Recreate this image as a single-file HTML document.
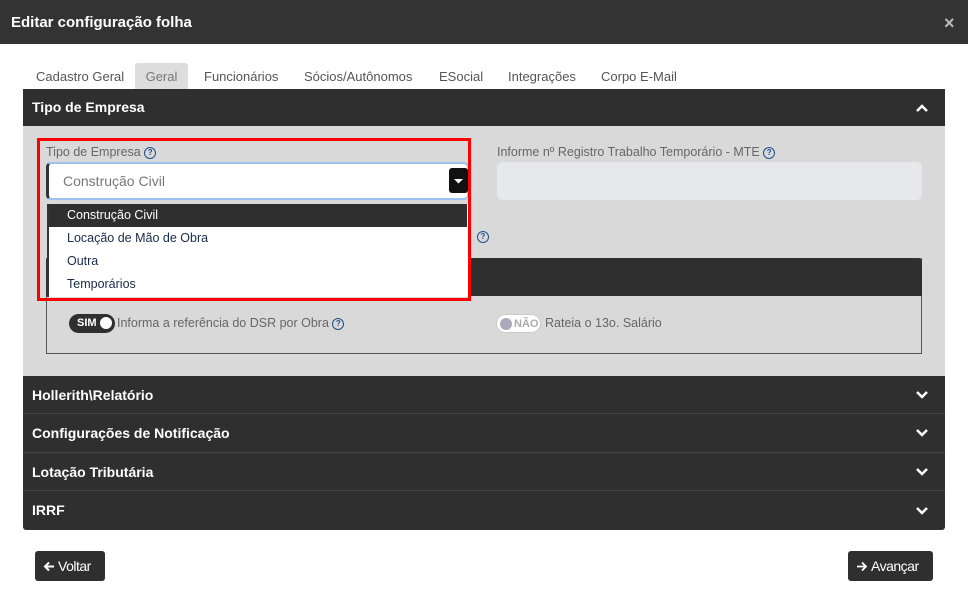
<!DOCTYPE html><html><head><meta charset="utf-8"><style>
*{box-sizing:border-box;margin:0;padding:0}
body{width:968px;height:593px;background:#fff;font-family:"Liberation Sans",sans-serif;position:relative;overflow:hidden}
.a{position:absolute}
.hdr{left:0;top:0;width:968px;height:44px;background:#333;color:#fff;font-weight:bold;font-size:15px;padding:14px 11px}
.tab{top:63px;height:26px;font-size:13px;color:#555;padding-top:6px}
.sec{left:23px;width:922px;background:#2f2f2f;color:#fff;font-weight:bold;font-size:14px;padding-left:9px}
.chev{position:absolute;right:16px;top:50%;margin-top:-5px}
.q{display:inline-block;width:12px;height:12px;border:1.3px solid #1f4f8a;border-radius:50%;font-size:8px;color:#1f4f8a;text-align:center;line-height:10px;font-weight:bold;vertical-align:middle}
.lbl{font-size:12.5px;color:#666;white-space:nowrap}
.item{left:49px;width:418px;height:23px;font-size:12.5px;color:#1a2a4a;padding:4px 18px}
.btn{background:#2f2f2f;color:#fff;font-size:14px;border-radius:3px;height:30px;top:551px;padding:7px 8px;white-space:nowrap;letter-spacing:-0.5px}
.btn svg{vertical-align:-1px;margin-right:3px}
</style></head><body>
<div class="a hdr">Editar configuração folha</div>
<div class="a" style="left:944px;top:13px;color:#bbb;font-size:18px;font-weight:bold">×</div>
<div class="a tab" style="left:36px">Cadastro Geral</div>
<div class="a tab" style="left:135px;width:53px;background:#ddd;border-radius:3px 3px 0 0;text-align:center;color:#777">Geral</div>
<div class="a tab" style="left:204px">Funcionários</div>
<div class="a tab" style="left:304px">Sócios/Autônomos</div>
<div class="a tab" style="left:439px">ESocial</div>
<div class="a tab" style="left:508px">Integrações</div>
<div class="a tab" style="left:601px">Corpo E-Mail</div>

<div class="a sec" style="top:89px;height:37px;padding-top:10px">Tipo de Empresa
<svg class="chev" width="14" height="10" viewBox="0 0 14 10"><path d="M2 8L7 3L12 8" stroke="#fff" stroke-width="2.5" fill="none"/></svg></div>
<div class="a" style="left:23px;top:126px;width:922px;height:250px;background:#d9d9d9"></div>

<div class="a lbl" style="left:46px;top:145px">Tipo de Empresa <span class="q">?</span></div>
<div class="a" style="left:46px;top:162px;width:423px;height:38px;background:#fff;border:2px solid #9cc3ee;border-left:3px solid #333;border-radius:5px;font-size:14px;color:#777;padding:9px 14px">Construção Civil</div>
<div class="a" style="left:449px;top:168px;width:19px;height:25px;background:#111;border-radius:3px"><svg width="19" height="25"><path d="M5 11h9l-4.5 4.5z" fill="#fff"/></svg></div>

<div class="a lbl" style="left:497px;top:145px">Informe nº Registro Trabalho Temporário - MTE <span class="q">?</span></div>
<div class="a" style="left:497px;top:162px;width:425px;height:38px;background:#e6e8eb;border-radius:6px"></div>
<div class="a" style="left:477px;top:228px"><span class="q">?</span></div>

<div class="a" style="left:46px;top:258px;width:876px;height:96px;border:1px solid #555;border-top:none"></div>
<div class="a" style="left:46px;top:258px;width:876px;height:38px;background:#2f2f2f;border-radius:3px 3px 0 0"></div>

<div class="a" style="left:69px;top:314px;width:46px;height:19px;background:#2f2f2f;border-radius:10px;color:#fff;font-size:11px;font-weight:bold;padding:3px 8px">SIM<span style="position:absolute;right:3px;top:3px;width:12px;height:12px;background:#fff;border-radius:50%"></span></div>
<div class="a lbl" style="left:117px;top:316px;font-size:12.5px">Informa a referência do DSR por Obra <span class="q">?</span></div>
<div class="a" style="left:496px;top:314px;width:45px;height:19px;background:#fff;border:1px solid #ccc;border-radius:10px;color:#aaa;font-size:11px;font-weight:bold;padding:3px 0 0 17px">NÃO<span style="position:absolute;left:3px;top:3px;width:12px;height:12px;background:#aab;border-radius:50%"></span></div>
<div class="a lbl" style="left:545px;top:316px">Rateia o 13o. Salário</div>

<div class="a" style="left:47px;top:204px;width:421px;height:93px;background:#fff;border-left:2px solid #333"></div>
<div class="a item" style="top:204px;background:#2f2f2f;color:#fff">Construção Civil</div>
<div class="a item" style="top:227px">Locação de Mão de Obra</div>
<div class="a item" style="top:250px">Outra</div>
<div class="a item" style="top:273px">Temporários</div>
<div class="a" style="left:37px;top:138px;width:434px;height:163px;border:3px solid #f00"></div>

<div class="a sec" style="top:376px;height:38px;padding-top:11px;border-bottom:1px solid #444">Hollerith\Relatório<svg class="chev" width="14" height="10"><path d="M2 2L7 7L12 2" stroke="#fff" stroke-width="2.5" fill="none"/></svg></div>
<div class="a sec" style="top:414px;height:39px;padding-top:11px;border-bottom:1px solid #444">Configurações de Notificação<svg class="chev" width="14" height="10"><path d="M2 2L7 7L12 2" stroke="#fff" stroke-width="2.5" fill="none"/></svg></div>
<div class="a sec" style="top:453px;height:38px;padding-top:11px;border-bottom:1px solid #444">Lotação Tributária<svg class="chev" width="14" height="10"><path d="M2 2L7 7L12 2" stroke="#fff" stroke-width="2.5" fill="none"/></svg></div>
<div class="a sec" style="top:491px;height:39px;padding-top:11px;border-radius:0 0 3px 3px">IRRF<svg class="chev" width="14" height="10"><path d="M2 2L7 7L12 2" stroke="#fff" stroke-width="2.5" fill="none"/></svg></div>

<div class="a btn" style="left:35px;width:70px"><svg width="12" height="11" viewBox="0 0 12 11"><path d="M11 5.5H2M6 1.5L2 5.5L6 9.5" stroke="#fff" stroke-width="2" fill="none"/></svg>Voltar</div>
<div class="a btn" style="left:848px;width:85px"><svg width="12" height="11" viewBox="0 0 12 11"><path d="M1 5.5H10M6 1.5L10 5.5L6 9.5" stroke="#fff" stroke-width="1.8" fill="none"/></svg>Avançar</div>
</body></html>
